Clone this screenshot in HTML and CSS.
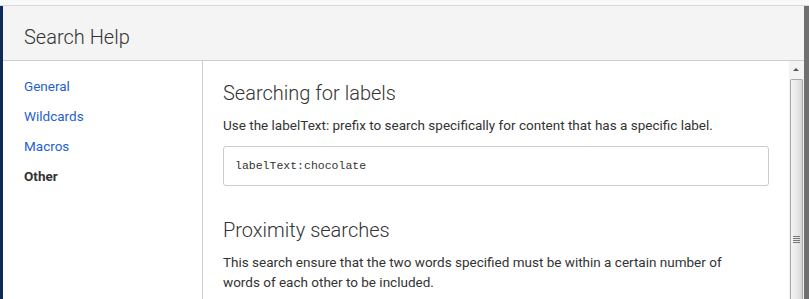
FILE: index.html
```html
<!DOCTYPE html>
<html lang="en">
<head>
  <meta charset="UTF-8">
  <title>Search Help</title>
  <link rel="stylesheet" href="styles.css">
</head>
<body>
  <div class="topbar"></div>

  <div class="screen">
    <div class="page-edge"></div>

    <div class="dialog">
      <div class="dialog-header">
        <h2 class="dialog-title">Search Help</h2>
      </div>

      <div class="dialog-body">
        <ul class="help-nav">
          <li><a href="#">General</a></li>
          <li><a href="#">Wildcards</a></li>
          <li><a href="#">Macros</a></li>
          <li class="active">Other</li>
        </ul>

        <div class="help-content">
          <h3>Searching for labels</h3>
          <p>Use the labelText: prefix to search specifically for content that has a specific label.</p>
          <pre class="example">labelText:chocolate</pre>

          <h3 class="section-gap">Proximity searches</h3>
          <p>This search ensure that the two words specified must be within a certain number of words of each other to be included.</p>
        </div>

        <div class="scrollbar">
          <div class="scroll-arrow"></div>
          <div class="scroll-thumb">
            <div class="grip"></div>
          </div>
        </div>
      </div>
    </div>

    <div class="shade-edge"></div>
  </div>
</body>
</html>
```
FILE: styles.css
```css
html, body {
  height: 100%;
}

body {
  margin: 0;
  font-family: Roboto, "Liberation Sans", sans-serif;
  font-size: 13.5px;
  color: #333;
  background-color: #f9f9f9;
  overflow: hidden;
  display: flex;
  flex-direction: column;
}

.topbar {
  height: 5px;
  border-bottom: 1px solid #d9d9d9;
  background-color: #f9f9f9;
}

.screen {
  flex: 1;
  display: flex;
  min-height: 0;
}

.page-edge {
  width: 3px;
  background-color: #0e2a5a;
}

.shade-edge {
  width: 5px;
  background-color: #6f6f6f;
}

.dialog {
  flex: 1;
  display: flex;
  flex-direction: column;
  background-color: #fff;
}

.dialog-header {
  height: 55px;
  box-sizing: border-box;
  background-color: #f4f4f4;
  border-bottom: 1px solid #ccc;
  display: flex;
  align-items: center;
  padding: 8px 21px 0 21px;
}

.dialog-title {
  margin: 0;
  font-size: 20px;
  font-weight: 300;
  color: #333;
}

.dialog-body {
  flex: 1;
  display: flex;
  min-height: 0;
}

.help-nav {
  width: 200px;
  margin: 0;
  padding: 10px 0 0 21px;
  box-sizing: border-box;
  list-style: none;
  border-right: 1px solid #ccc;
}

.help-nav li {
  line-height: 30px;
  font-size: 13.5px;
}

.help-nav a {
  color: #1f5fd0;
  text-decoration: none;
}

.help-nav .active {
  font-weight: 700;
  color: #333;
}

.help-content {
  flex: 1;
  padding: 18px 20px 0 20px;
}

.help-content h3 {
  margin: 0;
  font-size: 20px;
  font-weight: 300;
  line-height: 28px;
  color: #333;
}

.help-content p {
  margin: 8px 12px 0 0;
  line-height: 20px;
}

.help-content .section-gap {
  margin-top: 30px;
}

.example {
  margin: 11px 0 0 0;
  padding: 0 11px;
  height: 38px;
  line-height: 38px;
  border: 1px solid #ccc;
  border-radius: 3px;
  font-family: "Liberation Mono", monospace;
  font-size: 11.5px;
  color: #333;
}

.scrollbar {
  width: 15px;
  background-color: #f3f3f3;
  display: flex;
  flex-direction: column;
  align-items: center;
}

.scroll-arrow {
  height: 17px;
  width: 15px;
  position: relative;
}

.scroll-arrow::after {
  content: "";
  position: absolute;
  left: 4px;
  top: 7px;
  border-left: 3px solid transparent;
  border-right: 3px solid transparent;
  border-bottom: 3px solid #555;
}

.scroll-thumb {
  flex: 1;
  width: 13px;
  margin-top: 1px;
  box-sizing: border-box;
  border: 1px solid #a8a8a8;
  border-bottom: none;
  border-radius: 2px 2px 0 0;
  background: linear-gradient(to right, #f4f4f4, #e6e6e6 60%, #d4d4d4);
  display: flex;
  justify-content: center;
  padding-top: 156px;
}

.grip {
  width: 7px;
  height: 7px;
  background: repeating-linear-gradient(to bottom, #777 0, #777 1px, transparent 1px, transparent 2px);
}
```
